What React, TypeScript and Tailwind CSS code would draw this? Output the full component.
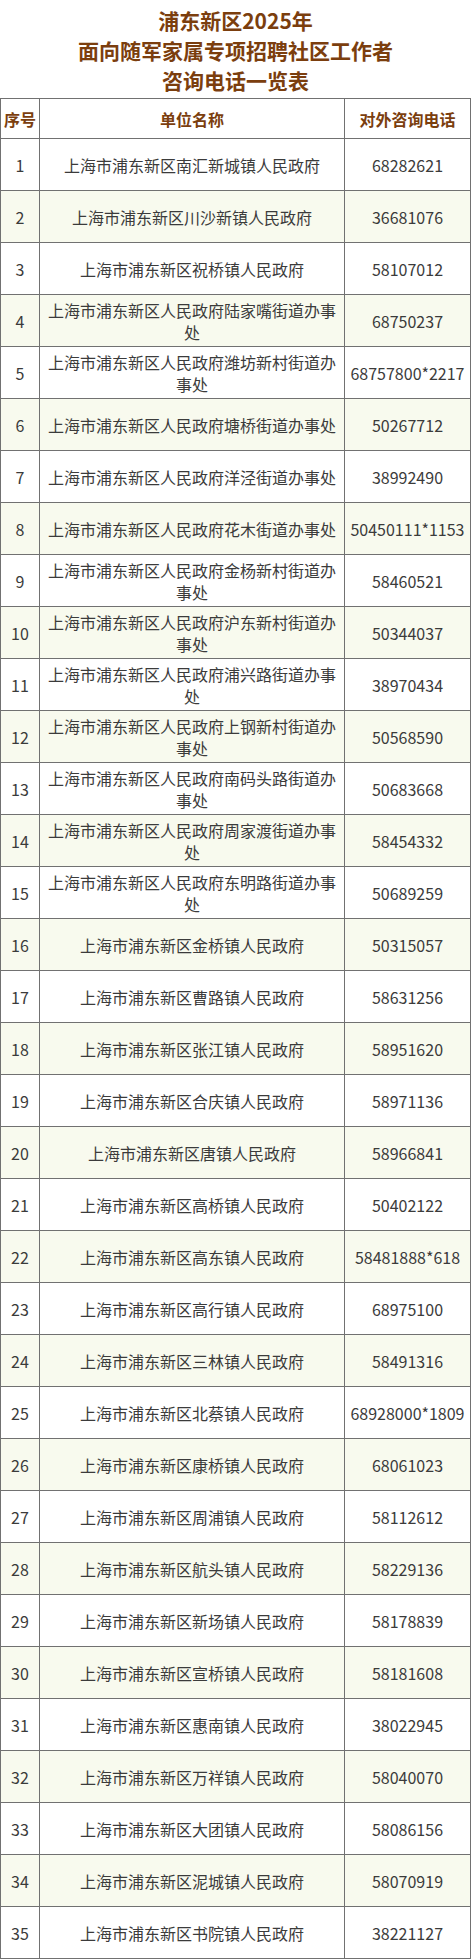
import React from "react";

const rows: [string, string][] = [
  ["上海市浦东新区南汇新城镇人民政府", "68282621"],
  ["上海市浦东新区川沙新镇人民政府", "36681076"],
  ["上海市浦东新区祝桥镇人民政府", "58107012"],
  ["上海市浦东新区人民政府陆家嘴街道办事处", "68750237"],
  ["上海市浦东新区人民政府潍坊新村街道办事处", "68757800*2217"],
  ["上海市浦东新区人民政府塘桥街道办事处", "50267712"],
  ["上海市浦东新区人民政府洋泾街道办事处", "38992490"],
  ["上海市浦东新区人民政府花木街道办事处", "50450111*1153"],
  ["上海市浦东新区人民政府金杨新村街道办事处", "58460521"],
  ["上海市浦东新区人民政府沪东新村街道办事处", "50344037"],
  ["上海市浦东新区人民政府浦兴路街道办事处", "38970434"],
  ["上海市浦东新区人民政府上钢新村街道办事处", "50568590"],
  ["上海市浦东新区人民政府南码头路街道办事处", "50683668"],
  ["上海市浦东新区人民政府周家渡街道办事处", "58454332"],
  ["上海市浦东新区人民政府东明路街道办事处", "50689259"],
  ["上海市浦东新区金桥镇人民政府", "50315057"],
  ["上海市浦东新区曹路镇人民政府", "58631256"],
  ["上海市浦东新区张江镇人民政府", "58951620"],
  ["上海市浦东新区合庆镇人民政府", "58971136"],
  ["上海市浦东新区唐镇人民政府", "58966841"],
  ["上海市浦东新区高桥镇人民政府", "50402122"],
  ["上海市浦东新区高东镇人民政府", "58481888*618"],
  ["上海市浦东新区高行镇人民政府", "68975100"],
  ["上海市浦东新区三林镇人民政府", "58491316"],
  ["上海市浦东新区北蔡镇人民政府", "68928000*1809"],
  ["上海市浦东新区康桥镇人民政府", "68061023"],
  ["上海市浦东新区周浦镇人民政府", "58112612"],
  ["上海市浦东新区航头镇人民政府", "58229136"],
  ["上海市浦东新区新场镇人民政府", "58178839"],
  ["上海市浦东新区宣桥镇人民政府", "58181608"],
  ["上海市浦东新区惠南镇人民政府", "38022945"],
  ["上海市浦东新区万祥镇人民政府", "58040070"],
  ["上海市浦东新区大团镇人民政府", "58086156"],
  ["上海市浦东新区泥城镇人民政府", "58070919"],
  ["上海市浦东新区书院镇人民政府", "38221127"],
];

export default function App() {
  return (
    <div
      className="w-[471px] bg-white text-[#3b3b3b]"
      style={{ fontFamily: '"Noto Sans CJK SC", "Noto Sans", sans-serif' }}
    >
      <div className="pt-[5px] pb-[3px] text-center text-[21px] font-bold leading-[30px] text-[#7b3e0e]">
        <div>浦东新区2025年</div>
        <div>面向随军家属专项招聘社区工作者</div>
        <div>咨询电话一览表</div>
      </div>
      <div className="w-[471px] border-l border-t border-[#717171]">
        <div className="grid h-[40px] grid-cols-[39px_305px_126px] text-[16px] font-bold text-[#7b3e0e]">
          <div className="flex items-center justify-center border-b border-r border-[#717171]">序号</div>
          <div className="flex items-center justify-center border-b border-r border-[#717171]">单位名称</div>
          <div className="flex items-center justify-center border-b border-r border-[#717171]">对外咨询电话</div>
        </div>
        {rows.map(([name, phone], i) => (
          <div
            key={i}
            className={`grid h-[52px] grid-cols-[39px_305px_126px] text-[16px] leading-[22px] ${
              i % 2 === 1 ? "bg-[#f8faee]" : "bg-white"
            }`}
          >
            <div className="flex items-center justify-center border-b border-r border-[#717171]">{i + 1}</div>
            <div className="flex items-center justify-center border-b border-r border-[#717171] px-[7px] text-center">
              {name}
            </div>
            <div className="flex items-center justify-center whitespace-nowrap border-b border-r border-[#717171]">
              {phone}
            </div>
          </div>
        ))}
      </div>
    </div>
  );
}
